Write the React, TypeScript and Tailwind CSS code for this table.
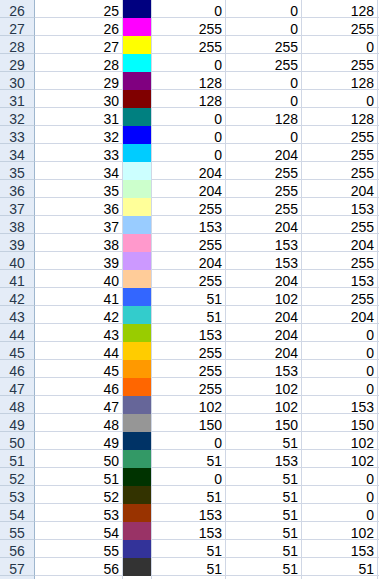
import React from "react";

type Row = { n: number; bg: string; r: number; g: number; b: number };

const rows: Row[] = [
  { n: 25, bg: "bg-[#000080]", r: 0, g: 0, b: 128 },
  { n: 26, bg: "bg-[#ff00ff]", r: 255, g: 0, b: 255 },
  { n: 27, bg: "bg-[#ffff00]", r: 255, g: 255, b: 0 },
  { n: 28, bg: "bg-[#00ffff]", r: 0, g: 255, b: 255 },
  { n: 29, bg: "bg-[#800080]", r: 128, g: 0, b: 128 },
  { n: 30, bg: "bg-[#800000]", r: 128, g: 0, b: 0 },
  { n: 31, bg: "bg-[#008080]", r: 0, g: 128, b: 128 },
  { n: 32, bg: "bg-[#0000ff]", r: 0, g: 0, b: 255 },
  { n: 33, bg: "bg-[#00ccff]", r: 0, g: 204, b: 255 },
  { n: 34, bg: "bg-[#ccffff]", r: 204, g: 255, b: 255 },
  { n: 35, bg: "bg-[#ccffcc]", r: 204, g: 255, b: 204 },
  { n: 36, bg: "bg-[#ffff99]", r: 255, g: 255, b: 153 },
  { n: 37, bg: "bg-[#99ccff]", r: 153, g: 204, b: 255 },
  { n: 38, bg: "bg-[#ff99cc]", r: 255, g: 153, b: 204 },
  { n: 39, bg: "bg-[#cc99ff]", r: 204, g: 153, b: 255 },
  { n: 40, bg: "bg-[#ffcc99]", r: 255, g: 204, b: 153 },
  { n: 41, bg: "bg-[#3366ff]", r: 51, g: 102, b: 255 },
  { n: 42, bg: "bg-[#33cccc]", r: 51, g: 204, b: 204 },
  { n: 43, bg: "bg-[#99cc00]", r: 153, g: 204, b: 0 },
  { n: 44, bg: "bg-[#ffcc00]", r: 255, g: 204, b: 0 },
  { n: 45, bg: "bg-[#ff9900]", r: 255, g: 153, b: 0 },
  { n: 46, bg: "bg-[#ff6600]", r: 255, g: 102, b: 0 },
  { n: 47, bg: "bg-[#666699]", r: 102, g: 102, b: 153 },
  { n: 48, bg: "bg-[#969696]", r: 150, g: 150, b: 150 },
  { n: 49, bg: "bg-[#003366]", r: 0, g: 51, b: 102 },
  { n: 50, bg: "bg-[#339966]", r: 51, g: 153, b: 102 },
  { n: 51, bg: "bg-[#003300]", r: 0, g: 51, b: 0 },
  { n: 52, bg: "bg-[#333300]", r: 51, g: 51, b: 0 },
  { n: 53, bg: "bg-[#993300]", r: 153, g: 51, b: 0 },
  { n: 54, bg: "bg-[#993366]", r: 153, g: 51, b: 102 },
  { n: 55, bg: "bg-[#333399]", r: 51, g: 51, b: 153 },
  { n: 56, bg: "bg-[#333333]", r: 51, g: 51, b: 51 },
];

const cell =
  "h-[18px] flex items-end justify-end pr-[3px] border-r border-b border-[#d0d7e5] leading-[12px] text-black";

export default function App() {
  return (
    <div
      className="w-[379px] h-[579px] overflow-hidden bg-white text-[14px]"
      style={{ fontFamily: '"Liberation Sans", Arial, sans-serif' }}
    >
      <div className="grid grid-cols-[35px_88px_29px_74px_76px_76px_1fr]">
        {rows.map((row) => (
          <React.Fragment key={row.n}>
            <div className="h-[18px] flex items-end justify-center bg-[#e4ecf7] border-r border-r-[#9eb6ce] border-b border-b-[#c3d0df] leading-[12px] text-[#27374a]">
              {row.n + 1}
            </div>
            <div className={cell}>{row.n}</div>
            <div className={`h-[18px] border-r border-[#d0d7e5] ${row.bg}`} />
            <div className={cell}>{row.r}</div>
            <div className={cell}>{row.g}</div>
            <div className={cell}>{row.b}</div>
            <div className="h-[18px] border-b border-[#d0d7e5]" />
          </React.Fragment>
        ))}
        <div className="h-[18px] bg-[#e4ecf7] border-r border-r-[#9eb6ce]" />
        <div className="h-[18px] border-r border-[#d0d7e5]" />
        <div className="h-[18px] border-r border-[#d0d7e5]" />
        <div className="h-[18px] border-r border-[#d0d7e5]" />
        <div className="h-[18px] border-r border-[#d0d7e5]" />
        <div className="h-[18px] border-r border-[#d0d7e5]" />
        <div className="h-[18px]" />
      </div>
    </div>
  );
}
